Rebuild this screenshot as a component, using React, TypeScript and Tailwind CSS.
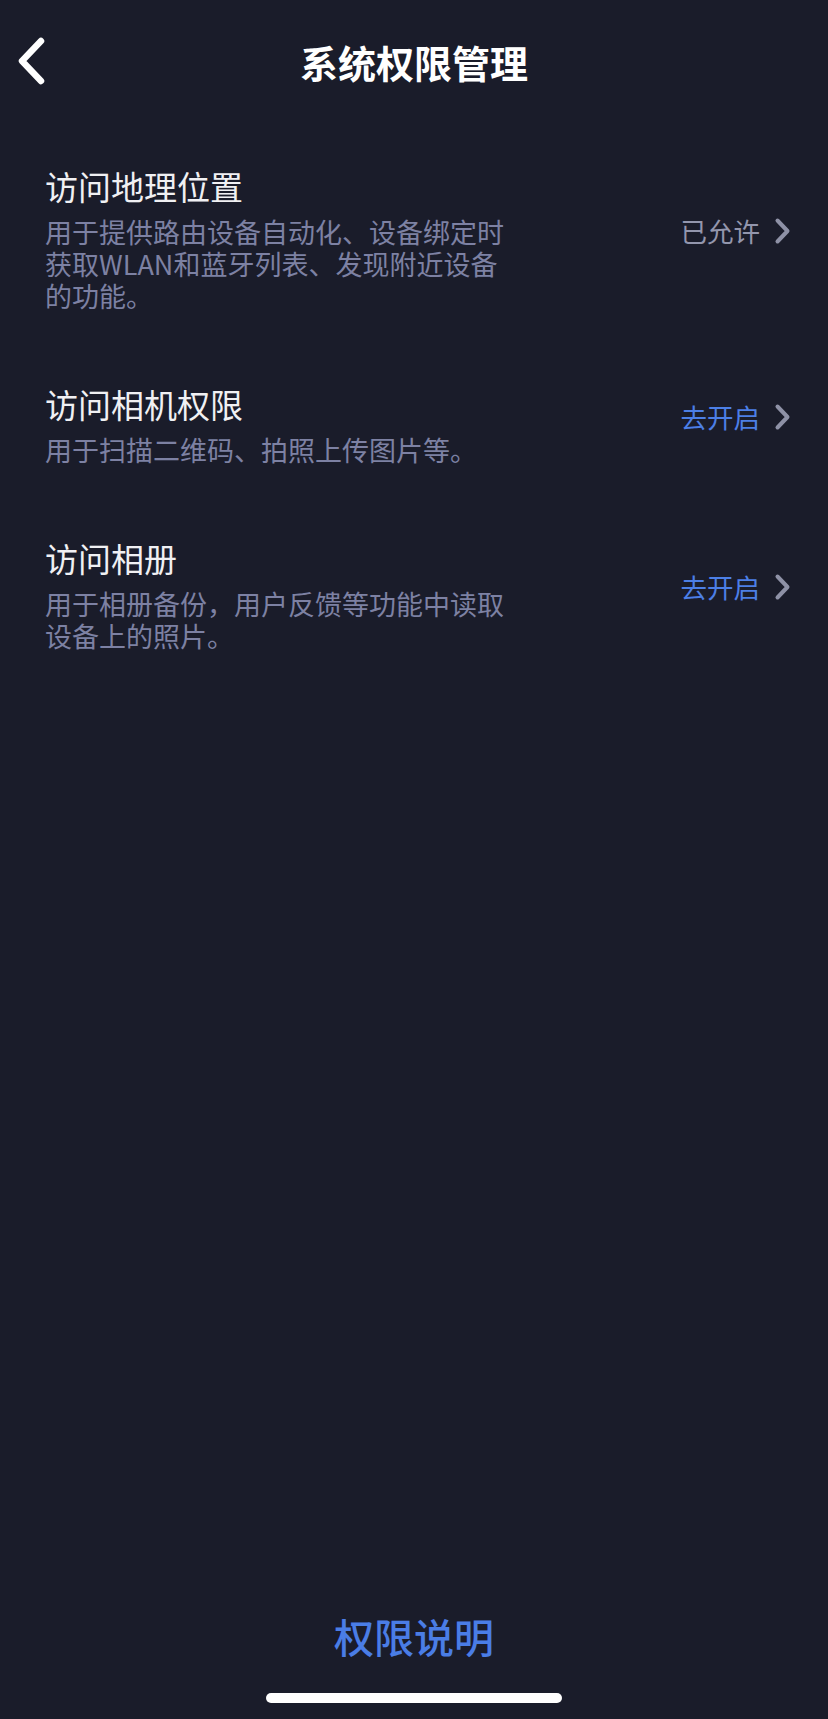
import { useState } from 'react'

type Permission = {
  id: string
  title: string
  desc: string
  granted: boolean
}

const permissions: Permission[] = [
  {
    id: 'location',
    title: '访问地理位置',
    desc: '用于提供路由设备自动化、设备绑定时获取WLAN和蓝牙列表、发现附近设备的功能。',
    granted: true,
  },
  {
    id: 'camera',
    title: '访问相机权限',
    desc: '用于扫描二维码、拍照上传图片等。',
    granted: false,
  },
  {
    id: 'album',
    title: '访问相册',
    desc: '用于相册备份，用户反馈等功能中读取设备上的照片。',
    granted: false,
  },
]

function BackIcon() {
  return (
    <svg width="32" height="50" viewBox="0 0 32 50" fill="none">
      <path
        d="M26 5 L7 25 L26 45"
        stroke="#ffffff"
        strokeWidth="6.5"
        strokeLinecap="round"
        strokeLinejoin="round"
      />
    </svg>
  )
}

function ChevronRight() {
  return (
    <svg width="17" height="28" viewBox="0 0 17 28" fill="none">
      <path
        d="M3.5 3.5 L13.5 14 L3.5 24.5"
        stroke="#8e91a6"
        strokeWidth="4"
        strokeLinecap="round"
        strokeLinejoin="round"
      />
    </svg>
  )
}

function PermissionRow({ item }: { item: Permission }) {
  return (
    <div className="flex items-center justify-between pt-[34px] pb-[38px] pl-[45px] pr-[37px]">
      <div className="flex w-[470px] flex-col">
        <div className="text-[33px] leading-[40px] text-[#f0f0f3]">
          {item.title}
        </div>
        <div className="mt-[10px] text-[27px] leading-[32px] text-[#7d81a3]">
          {item.desc}
        </div>
      </div>
      <button className="mb-[16px] flex items-center gap-[14px]">
        <span
          className={
            item.granted
              ? 'text-[26.5px] leading-[32px] text-[#9396ad]'
              : 'text-[26.5px] leading-[32px] text-[#4c7fe6]'
          }
        >
          {item.granted ? '已允许' : '去开启'}
        </span>
        <ChevronRight />
      </button>
    </div>
  )
}

export default function App() {
  const [showInfo, setShowInfo] = useState(false)

  return (
    <div
      className="flex min-h-[1719px] w-full flex-col bg-[#1a1c2a]"
      style={{ fontFamily: '"Noto Sans CJK SC", "Noto Sans", sans-serif' }}
    >
      {/* header */}
      <div className="grid h-[132px] grid-cols-[1fr_auto_1fr] items-center pb-[8px]">
        <button className="flex pl-[15px] pb-[2px]">
          <BackIcon />
        </button>
        <div className="text-[38px] font-semibold leading-[48px] text-white">
          系统权限管理
        </div>
        <div />
      </div>

      {/* list */}
      <div className="flex flex-col">
        {permissions.map((p) => (
          <PermissionRow key={p.id} item={p} />
        ))}
      </div>

      <div className="flex-1" />

      {/* footer */}
      <div className="flex flex-col items-center pb-[16px]">
        <button
          onClick={() => setShowInfo((s) => !s)}
          className="text-[40px] font-medium leading-[48px] text-[#4a7de6]"
        >
          权限说明
        </button>
        <div className="mt-[33px] h-[10px] w-[296px] rounded-full bg-white" />
      </div>
      {showInfo && null}
    </div>
  )
}
